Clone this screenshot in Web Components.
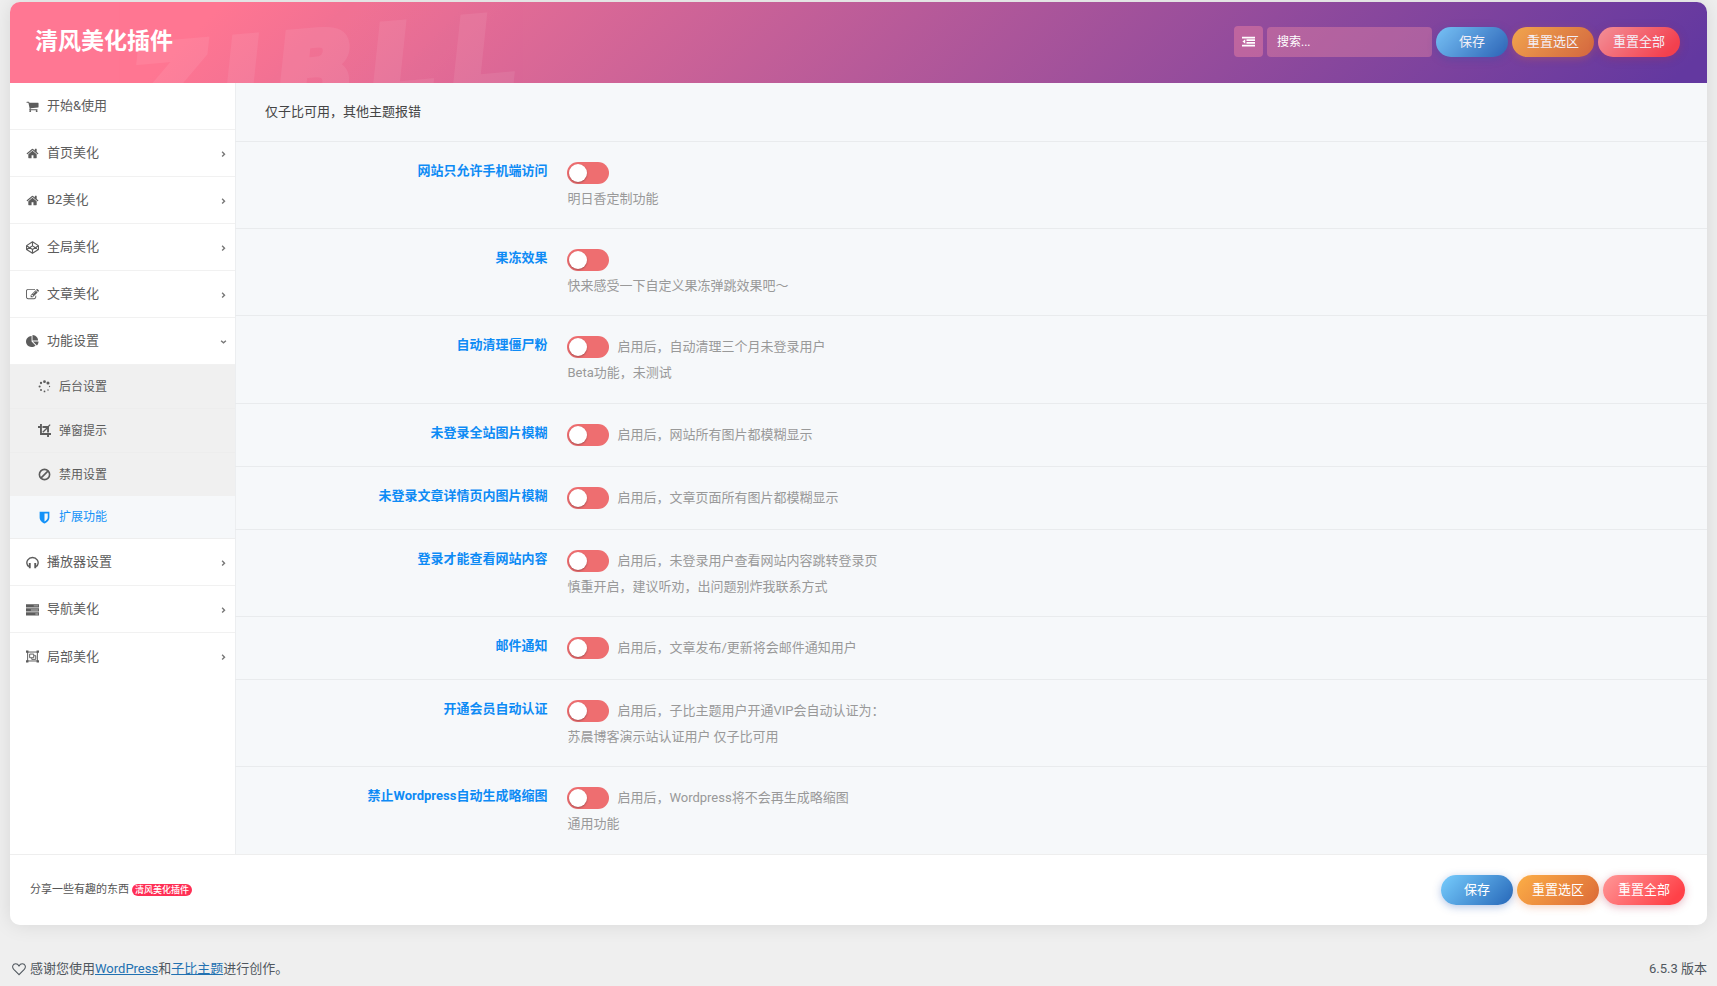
<!DOCTYPE html>
<html lang="zh-CN">
<head>
<meta charset="utf-8">
<title>清风美化插件</title>
<style>
body{margin:0;background:#efefef;color:#555;font:13px/20px Roboto,"Noto Sans CJK SC",sans-serif}
</style>
</head>
<body>
<plugin-page></plugin-page>
<script>
const ICONS = {
  cart: '<path transform="scale(.00893)" d="M704 1536q0 52-38 90t-90 38-90-38-38-90 38-90 90-38 90 38 38 90zm896 0q0 52-38 90t-90 38-90-38-38-90 38-90 90-38 90 38 38 90zm128-1088v512q0 24-16.5 42.5t-40.5 21.5l-1044 122q13 60 13 70 0 16-24 64h920q26 0 45 19t19 45-19 45-45 19h-1024q-26 0-45-19t-19-45q0-11 8-31.5t16-36 21.5-40 15.500-29.500l-177-823h-204q-26 0-45-19t-19-45 19-45 45-19h256q16 0 28.500 6.500t19.500 15.500 13 24.500 8 26 5.500 29.500 4.500 26h1201q26 0 45 19t19 45z"/>',
  home: '<path transform="scale(.00893)" d="M1472 992v480q0 26-19 45t-45 19h-384v-384h-256v384h-384q-26 0-45-19t-19-45v-480q0-1 .5-3t.5-3l575-474 575 474q1 2 1 6zm223-69l-62 74q-8 9-21 11h-3q-13 0-21-7l-692-577-692 577q-12 8-24 7-13-2-21-11l-62-74q-8-10-7-23.500t11-21.500l719-599q32-26 76-26t76 26l244 204v-195q0-14 9-23t23-9h192q14 0 23 9t9 23v408l219 182q10 8 11 21.500t-7 23.500z"/>',
  codepen: '<path fill="none" stroke="currentColor" stroke-width="1.400" stroke-linejoin="round" d="M8 1L15.300 5.700v4.800L8 15.200.700 10.500V5.700zM8 1v5M8 10.500v4.700M.700 5.700L8 10.500l7.300-4.800M.700 10.500L8 6l7.300 4.500"/>',
  edit: '<path transform="scale(.00893)" d="M888 1184l116-116-152-152-116 116v56h96v96h56zm440-720q-16-16-33 1l-350 350q-17 17-1 33t33-1l350-350q17-17 1-33zm80 594v190q0 119-84.500 203.500t-203.500 84.500h-832q-119 0-203.500-84.500t-84.500-203.500v-832q0-119 84.500-203.500t203.500-84.500h832q63 0 117 25 15 7 18 23 3 17-9 29l-49 49q-14 14-32 8-23-6-45-6h-832q-66 0-113 47t-47 113v832q0 66 47 113t113 47h832q66 0 113-47t47-113v-126q0-13 9-22l64-64q15-15 35-7t20 29zm-96-738l288 288-672 672h-288v-288zm444 132l-92 92-288-288 92-92q28-28 68-28t68 28l152 152q28 28 28 68t-28 68z"/>',
  pie: '<path transform="scale(.00893)" d="M768 890l546 546q-106 108-247.500 168t-298.500 60q-209 0-385.500-103t-279.500-279.500-103-385.500 103-385.500 279.500-279.500 385.500-103v762zm187 6h773q0 157-60 298.500t-168 247.500zm709-128h-768v-768q209 0 385.500 103t279.500 279.500 103 385.500z"/>',
  spinner: '<circle cx="8" cy="2" r="1.700"/><circle cx="12.300" cy="3.700" r="1.900"/><circle cx="14.200" cy="8" r=".8"/><circle cx="12.300" cy="12.300" r=".9"/><circle cx="8" cy="14" r="1.100"/><circle cx="3.700" cy="12.300" r="1.200"/><circle cx="2" cy="8" r="1.300"/><circle cx="3.700" cy="3.700" r="1.400"/>',
  crop: '<path d="M2.500 0h2.300v11.200H16v2.300h-2.500V16h-2.300v-2.500H2.500V4.800H0V2.500h2.500zM5.500 2.500h6.700L14.500.200l1 1-2 2.300V10.500h-2.300V6L6.500 10.700 5.300 9.500 10 4.800H5.500z"/>',
  ban: '<g fill="none" stroke="currentColor" stroke-width="2"><circle cx="8" cy="8" r="6.300"/><path d="M12.500 3.500l-9 9"/></g>',
  shield: '<path d="M2 1h12v7c0 4-4 6.500-6 7.500C6 14.500 2 12 2 8zm6 2v10c2-1 4-3 4-5V3z" fill-rule="evenodd"/>',
  headphones: '<path fill="none" stroke="currentColor" stroke-width="1.700" d="M3.500 13C.5 11 .6 7 2 5c3-4.300 9-4.300 12 0 1.400 2 1.500 6-1.500 8"/><path d="M3.500 8.500h2.300V15H3.500zM10.200 8.500h2.300V15h-2.300z"/>',
  tasks: '<path d="M0 1.500h16v4H0zM0 6.500h16v4H0zM0 11.500h16v4H0z"/><path fill="#fff" opacity=".6" d="M9.500 3H15v1H9.500zM6 8h9v1.300H6zM11.500 13H15v1h-3.500z"/>',
  group: '<g fill="none" stroke="currentColor" stroke-width="1.200"><path d="M2 2.500h12v11H2z"/><path d="M4.500 5h5v4.500h-5zM10 7h2v4.500H7V10"/></g><path d="M0 .5h3v3H0zM13 .5h3v3h-3zM0 12.500h3v3H0zM13 12.500h3v3h-3z"/>',
  outdent: '<path d="M0 2h16v2.200H0zM5.500 5.300H16v2.200H5.500zM5.500 8.600H16v2.200H5.500zM0 12h16v2.200H0zM4 5.200v5.600L.5 8z"/>',
  right: '<path fill="none" stroke="currentColor" stroke-width="2" d="M6 5.500L9.500 9 6 12.500"/>',
  down: '<path fill="none" stroke="currentColor" stroke-width="2" d="M4.500 7L8 10l3.500-3"/>',
  heart: '<path fill="none" stroke="currentColor" stroke-width="1.200" d="M8 14.500L2 8.500C-.5 5.500 1 2 4.200 2 6 2 7.200 3 8 4.500 8.800 3 10 2 11.800 2 15 2 16.500 5.500 14 8.500z"/>'
};

function component(name, css, render) {
  customElements.define(name, class extends HTMLElement {
    constructor() {
      super();
      this.attachShadow({mode: 'open'});
    }
    connectedCallback() {
      this.shadowRoot.innerHTML = `<style>:host,*{box-sizing:border-box}${css}</style>${render(this)}`;
    }
  });
}
const attr = (el, n) => el.getAttribute(n) || '';

component('ui-icon',
  `:host{display:block;flex:none;width:13px;height:13px}svg{display:block;width:100%;height:100%}`,
  el => `<svg viewBox="0 0 16 16" fill="currentColor" aria-hidden="true">${ICONS[attr(el, 'name')]}</svg>`);

component('pill-button',
  `:host{display:block}
   button{display:block;height:30px;width:82px;padding:0;border:0;border-radius:15px;color:#fff;font:inherit;line-height:30px;text-align:center;cursor:pointer;
     background:linear-gradient(135deg,#fcae46,#dc6a38);box-shadow:0 2px 8px rgba(230,110,50,.3)}
   :host([kind=save]) button{width:72px;background:linear-gradient(135deg,#73c8fa 5%,#2a6cbc 95%);box-shadow:0 2px 8px rgba(40,90,180,.35)}
   :host([kind=all]) button{background:linear-gradient(135deg,#ff9898,#ff4148 85%);box-shadow:0 2px 8px rgba(180,50,80,.35)}`,
  () => `<button type="button"><slot></slot></button>`);

component('action-buttons',
  `:host{display:flex;gap:4px}`,
  () => `<pill-button kind="save">保存</pill-button><pill-button>重置选区</pill-button><pill-button kind="all">重置全部</pill-button>`);

component('plugin-header',
  `:host{display:flex;align-items:center;position:relative;height:81px;padding:0 27px 2px 25px;overflow:hidden;border-radius:10px 10px 0 0;
     background:linear-gradient(135deg,#ff7793 12%,#6338a0 98%);color:#fff}
   h1{margin:0;font-size:23px;line-height:30px;font-weight:700;position:relative}
   .mark{position:absolute;left:122px;top:33px;display:flex;gap:15px;font:italic 700 104px/104px "DejaVu Sans",sans-serif;color:#fff;-webkit-text-stroke:7px #fff;opacity:.07;transform:rotate(-5deg);transform-origin:0 50%}
   .tools{margin-left:auto;display:flex;align-items:center;gap:4px;position:relative}
   .toggle{display:grid;place-items:center;width:29px;height:31px;padding:0;border:0;border-radius:4px;background:rgba(255,140,165,.4);color:#fff}
   input{width:165px;height:30px;margin:0;padding:0 10px;border:0;border-radius:4px;background:rgba(255,150,165,.35);color:#fff;font:12px/20px Roboto,"Noto Sans CJK SC",sans-serif}
   input::placeholder{color:#fff;opacity:1}
   action-buttons{opacity:.92}`,
  () => `<div class="mark" aria-hidden="true"><span>Z</span><span>I</span><span>B</span><span>L</span><span>L</span></div>
   <h1>清风美化插件</h1>
   <div class="tools"><button class="toggle" type="button" aria-label="展开全部"><ui-icon name="outdent"></ui-icon></button>
   <input type="text" placeholder="搜索..." aria-label="搜索"><action-buttons></action-buttons></div>`);

component('nav-item',
  `:host{display:block}
   a{display:flex;align-items:center;gap:8px;height:47px;padding:0 6px 0 16px;border-bottom:1px solid #f1f1f1;color:#5c5c5c;text-decoration:none}
   .arrow{margin-left:auto;width:11px;height:11px;color:#777}
   :host([sub]) a{height:43px;padding:0 16px 0 28px;border:0;background:#f0f0f0;font-size:12px}
   :host([sub][lined]) a{height:44px;border-top:1px solid #ededed}
   :host([sub][active]) a{background:#f6f8fa;color:#1492f8;border-bottom:1px solid #eee}
   :host([last]) a{border:0}`,
  el => `<a href="#"><ui-icon name="${attr(el, 'icon')}"></ui-icon><slot></slot>${attr(el, 'arrow') ? `<ui-icon class="arrow" name="${attr(el, 'arrow')}"></ui-icon>` : ''}</a>`);

component('side-nav',
  `:host{display:block;flex:none;width:225px;background:#fff}`,
  () => `<nav aria-label="设置">
   <nav-item icon="cart">开始&amp;使用</nav-item>
   <nav-item icon="home" arrow="right">首页美化</nav-item>
   <nav-item icon="home" arrow="right">B2美化</nav-item>
   <nav-item icon="codepen" arrow="right">全局美化</nav-item>
   <nav-item icon="edit" arrow="right">文章美化</nav-item>
   <nav-item icon="pie" arrow="down">功能设置</nav-item>
   <nav-item sub icon="spinner">后台设置</nav-item>
   <nav-item sub lined icon="crop">弹窗提示</nav-item>
   <nav-item sub lined icon="ban">禁用设置</nav-item>
   <nav-item sub active icon="shield">扩展功能</nav-item>
   <nav-item icon="headphones" arrow="right">播放器设置</nav-item>
   <nav-item icon="tasks" arrow="right">导航美化</nav-item>
   <nav-item last icon="group" arrow="right">局部美化</nav-item></nav>`);

component('setting-row',
  `:host{display:flex;flex:0 0 auto;padding:20px 30px;border-bottom:1px solid #e9ebed}
   :host([desc]){flex-grow:1;padding-bottom:18px}
   .title{width:20%;flex:none;color:#0e8bf5;font-weight:700;line-height:18px;text-align:right}
   .control{margin-left:20px;color:#999}
   .line{display:flex;gap:8px;height:22px;line-height:22px}
   input{appearance:none;flex:none;width:42px;height:22px;margin:0;padding:2px;border-radius:11px;background:#ee6e70}
   input::before{content:"";display:block;width:18px;height:18px;border-radius:50%;background:#fff;box-shadow:0 1px 2px rgba(0,0,0,.3)}
   input:checked{background:#2a9df4}
   input:checked::before{margin-left:20px}
   .desc{line-height:22px;padding-top:4px}`,
  el => `<label class="title" for="sw">${attr(el, 'label')}</label><div class="control">
   <div class="line"><input type="checkbox" id="sw"><span>${attr(el, 'text')}</span></div>
   ${attr(el, 'desc') ? `<div class="desc">${attr(el, 'desc')}</div>` : ''}</div>`);

component('settings-panel',
  `:host{display:flex;flex-direction:column;flex:1;min-width:0;background:#f6f8fa;box-shadow:inset 1px 0 #eceef0}
   p{margin:0;padding:19px 30px;line-height:20px;border-bottom:1px solid #e9ebed;color:#444}
   setting-row:last-child{border-color:transparent}`,
  () => `<p>仅子比可用，其他主题报错</p>
   <setting-row label="网站只允许手机端访问" desc="明日香定制功能"></setting-row>
   <setting-row label="果冻效果" desc="快来感受一下自定义果冻弹跳效果吧～"></setting-row>
   <setting-row label="自动清理僵尸粉" text="启用后，自动清理三个月未登录用户" desc="Beta功能，未测试"></setting-row>
   <setting-row label="未登录全站图片模糊" text="启用后，网站所有图片都模糊显示"></setting-row>
   <setting-row label="未登录文章详情页内图片模糊" text="启用后，文章页面所有图片都模糊显示"></setting-row>
   <setting-row label="登录才能查看网站内容" text="启用后，未登录用户查看网站内容跳转登录页" desc="慎重开启，建议听劝，出问题别炸我联系方式"></setting-row>
   <setting-row label="邮件通知" text="启用后，文章发布/更新将会邮件通知用户"></setting-row>
   <setting-row label="开通会员自动认证" text="启用后，子比主题用户开通VIP会自动认证为：" desc="苏晨博客演示站认证用户 仅子比可用"></setting-row>
   <setting-row label="禁止Wordpress自动生成略缩图" text="启用后，Wordpress将不会再生成略缩图" desc="通用功能"></setting-row>`);

component('panel-footer',
  `:host{display:flex;align-items:center;justify-content:space-between;height:71px;padding:0 22px 0 20px;border-top:1px solid #eee;border-radius:0 0 10px 10px;background:#fff}
   .about{display:flex;align-items:center;gap:3px;font-size:11px;color:#555}
   .badge{padding:0 3px;border-radius:6px;background:#ff2f55;color:#fff;font-size:9px;line-height:12px;font-weight:500}`,
  () => `<div class="about"><span>分享一些有趣的东西</span><span class="badge">清风美化插件</span></div><action-buttons></action-buttons>`);

component('page-credit',
  `:host{display:flex;justify-content:space-between;padding:34px 10px 6px;line-height:20px;color:#50575e}
   .thanks{display:flex;align-items:center;gap:4px;padding-left:2px}
   ui-icon{width:14px;height:14px}
   a{color:#2271b1}`,
  () => `<div class="thanks"><ui-icon name="heart"></ui-icon><span>感谢您使用<a href="#">WordPress</a>和<a href="#">子比主题</a>进行创作。</span></div><span>6.5.3 版本</span>`);

component('plugin-page',
  `:host{display:block;padding-top:2px}
   .card{margin:0 10px;border-radius:10px;box-shadow:0 0 20px rgba(0,0,0,.1)}
   .body{display:flex;min-height:771px}`,
  () => `<div class="card"><plugin-header></plugin-header><div class="body"><side-nav></side-nav><settings-panel></settings-panel></div><panel-footer></panel-footer></div><page-credit></page-credit>`);
</script>
</body>
</html>
